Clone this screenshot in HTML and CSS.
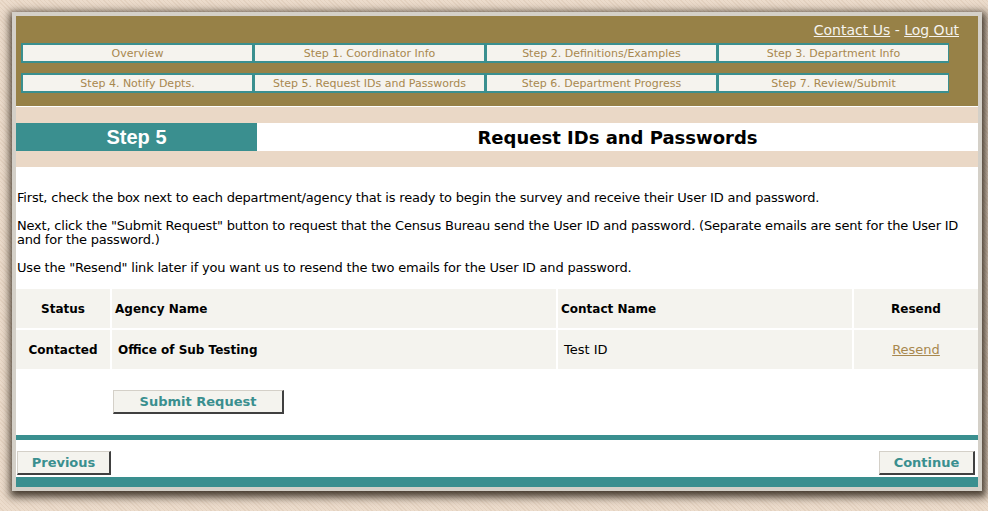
FILE: index.html
```html
<!DOCTYPE html>
<html lang="en">
<head>
    <meta charset="UTF-8">
    <title>Step 5 - Request IDs and Passwords</title>
    <link rel="stylesheet" href="styles.css">
</head>
<body>
    <div class="frame">
        <div class="header">
            <div class="toplinks">
                <a href="#">Contact Us</a> - <a href="#">Log Out</a>
            </div>
            <div class="nav">
                <a class="nav-item" href="#">Overview</a>
                <a class="nav-item" href="#">Step 1. Coordinator Info</a>
                <a class="nav-item" href="#">Step 2. Definitions/Examples</a>
                <a class="nav-item" href="#">Step 3. Department Info</a>
            </div>
            <div class="nav">
                <a class="nav-item" href="#">Step 4. Notify Depts.</a>
                <a class="nav-item" href="#">Step 5. Request IDs and Passwords</a>
                <a class="nav-item" href="#">Step 6. Department Progress</a>
                <a class="nav-item" href="#">Step 7. Review/Submit</a>
            </div>
        </div>

        <div class="band"></div>
        <div class="step-row">
            <div class="step-num">Step 5</div>
            <h1 class="step-title">Request IDs and Passwords</h1>
        </div>
        <div class="band"></div>

        <div class="content">
            <p>First, check the box next to each department/agency that is ready to begin the survey and receive their User ID and password.</p>
            <p>Next, click the "Submit Request" button to request that the Census Bureau send the User ID and password. (Separate emails are sent for the User ID and for the password.)</p>
            <p>Use the "Resend" link later if you want us to resend the two emails for the User ID and password.</p>
        </div>

        <table class="agencies">
            <tr>
                <th class="col-status">Status</th>
                <th class="col-agency">Agency Name</th>
                <th class="col-contact">Contact Name</th>
                <th class="col-resend">Resend</th>
            </tr>
            <tr>
                <td class="col-status bold">Contacted</td>
                <td class="col-agency bold">Office of Sub Testing</td>
                <td class="col-contact">Test ID</td>
                <td class="col-resend"><a href="#">Resend</a></td>
            </tr>
        </table>

        <div class="submit-row">
            <button class="btn submit">Submit Request</button>
        </div>

        <div class="rule"></div>
        <div class="footer-nav">
            <button class="btn prev">Previous</button>
            <button class="btn next">Continue</button>
        </div>
        <div class="bottom-bar"></div>
    </div>
</body>
</html>
```

FILE: styles.css
```css
body {
    margin: 0;
    height: 511px;
    overflow: hidden;
    font-family: "DejaVu Sans", Verdana, sans-serif;
    font-size: 13px;
    color: #000;
    background-color: #ead9c8;
    background-image: repeating-linear-gradient(45deg, #ecdccc 0px, #ecdccc 2px, #e4d2c0 2px, #e4d2c0 3px);
}

.frame {
    margin: 12px 6px 0 12px;
    border: 4px solid #d4d0c8;
    background-color: #fff;
    box-shadow: 1px 3px 8px 3px rgba(40, 30, 20, 0.85);
}

.header {
    background-color: #978147;
    padding: 0 0 13px 5px;
    border-bottom: 1px solid #fff;
}

.toplinks {
    height: 27px;
    line-height: 28px;
    text-align: right;
    padding-right: 19px;
    font-size: 14px;
    color: #f5f3ee;
}

.toplinks a {
    color: #f5f3ee;
}

.nav {
    display: grid;
    grid-template-columns: repeat(4, 232px);
}

.nav + .nav {
    margin-top: 10px;
}

.nav-item {
    display: block;
    height: 16px;
    line-height: 17px;
    border: 2px solid #3a8f8f;
    border-right-width: 1px;
    background-color: #f5f3ee;
    color: #a8884e;
    text-decoration: none;
    text-align: center;
    font-size: 11px;
}

.band {
    height: 16px;
    background-color: #ead8c6;
}

.step-row {
    display: flex;
    height: 28px;
}

.step-num {
    width: 241px;
    background-color: #3a8f8f;
    color: #fff;
    font-family: "Liberation Sans", Arial, sans-serif;
    font-weight: bold;
    font-size: 20px;
    line-height: 28px;
    text-align: center;
}

.step-title {
    flex: 1;
    margin: 0;
    font-size: 18px;
    line-height: 29px;
    text-align: center;
}

.content {
    padding: 24px 1px 0 1px;
}

.content p {
    margin: 0 0 14px 0;
    line-height: 14px;
    letter-spacing: -0.2px;
}

.agencies {
    width: 100%;
    margin-top: 14px;
    border-collapse: collapse;
    background-color: #f4f3ee;
}

.agencies th,
.agencies td {
    height: 39px;
    padding: 0 3px;
    text-align: left;
    border-left: 2px solid #fff;
}

.agencies th {
    font-size: 12px;
}

.agencies td {
    border-top: 2px solid #fff;
}

.agencies .col-status {
    width: 88px;
    text-align: center;
    border-left: none;
}

.agencies td.col-agency,
.agencies td.col-contact {
    padding-left: 6px;
}

.agencies .col-agency {
    width: 435px;
}

.agencies .col-contact {
    width: 285px;
}

.agencies .col-resend {
    text-align: center;
}

.bold {
    font-weight: bold;
}

.agencies td.bold {
    font-size: 12px;
}

.agencies a {
    color: #a8884e;
}

.btn {
    font-family: "DejaVu Sans", Verdana, sans-serif;
    font-weight: bold;
    font-size: 13px;
    color: #3a8f8f;
    background-color: #f4f3ee;
    border-style: solid;
    border-width: 1px 2px 2px 1px;
    border-color: #d4d0c8 #404040 #404040 #d4d0c8;
    height: 24px;
    padding: 0;
    cursor: pointer;
}

.submit-row {
    padding: 21px 0 21px 97px;
}

.submit {
    width: 171px;
}

.rule {
    height: 5px;
    background-color: #3a8f8f;
}

.footer-nav {
    display: flex;
    justify-content: space-between;
    padding: 11px 3px 2px 1px;
}

.prev {
    width: 94px;
}

.next {
    width: 96px;
}

.bottom-bar {
    height: 10px;
    background-color: #3a8f8f;
}
```
